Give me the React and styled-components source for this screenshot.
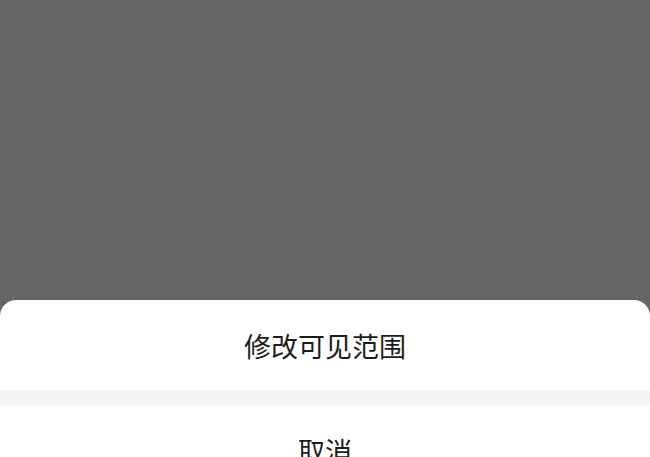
import styled, { createGlobalStyle } from "styled-components"

const Global = createGlobalStyle`
html, body {
  margin: 0;
  padding: 0;
  height: 100%;
  overflow: hidden;
}
#root {
  height: 100%;
}
`

const Overlay = styled.div`
height: 457px;
background: #666666;
display: flex;
flex-direction: column;
justify-content: flex-end;
overflow: hidden;
font-family: "Noto Sans CJK SC", "Noto Sans", sans-serif;
`

const Sheet = styled.div`
background: #ffffff;
border-radius: 16px 16px 0 0;
height: 157px;
overflow: hidden;
display: flex;
flex-direction: column;
flex-shrink: 0;
`

const Option = styled.div`
height: ${props => props.h}px;
flex-shrink: 0;
display: flex;
align-items: center;
justify-content: center;
font-size: 27px;
color: #1c1c1c;
`

const Divider = styled.div`
height: 14px;
flex-shrink: 0;
background: #f5f5f5;
`

export default function App() {
    return (
        <>
            <Global />
            <Overlay>
                <Sheet>
                    <Option h={91}>修改可见范围</Option>
                    <Divider />
                    <Option h={91}>取消</Option>
                </Sheet>
            </Overlay>
        </>
    )
}
